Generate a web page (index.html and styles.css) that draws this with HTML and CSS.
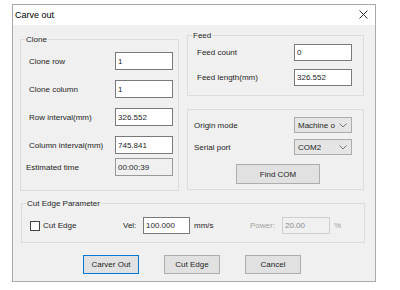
FILE: index.html
```html
<!DOCTYPE html>
<html lang="en">
<head>
  <meta charset="UTF-8" />
  <title>Carve out</title>
  <link rel="stylesheet" href="styles.css">
</head>
<body>
  <div class="window">
    <div class="titlebar">
      <span class="title">Carve out</span>
      <svg class="close" width="9" height="9" viewBox="0 0 9 9">
        <path d="M0.5 0.5 L8.5 8.5 M8.5 0.5 L0.5 8.5" stroke="#333" stroke-width="1" fill="none" />
      </svg>
    </div>
    <div class="content">
      <div class="top">
        <fieldset class="group clone">
          <legend>Clone</legend>
          <div class="rows">
            <div class="row"><label>Clone row</label><input class="edit" value="1"></div>
            <div class="row"><label>Clone column</label><input class="edit" value="1"></div>
            <div class="row"><label>Row interval(mm)</label><input class="edit" value="326.552"></div>
            <div class="row"><label>Column interval(mm)</label><input class="edit" value="745.841"></div>
            <div class="row est"><label>Estimated time</label><input class="edit readonly" value="00:00:39" readonly></div>
          </div>
        </fieldset>
        <div class="right">
          <fieldset class="group feed">
            <legend>Feed</legend>
            <div class="rows">
              <div class="row"><label>Feed count</label><input class="edit" value="0"></div>
              <div class="row"><label>Feed length(mm)</label><input class="edit" value="326.552"></div>
            </div>
          </fieldset>
          <div class="group origin">
            <div class="row"><label>Origin mode</label>
              <div class="combo"><span>Machine o</span>
                <svg width="8" height="5" viewBox="0 0 8 5"><path d="M0.5 0.5 L4 4 L7.5 0.5" stroke="#777" fill="none" /></svg>
              </div>
            </div>
            <div class="row"><label>Serial port</label>
              <div class="combo"><span>COM2</span>
                <svg width="8" height="5" viewBox="0 0 8 5"><path d="M0.5 0.5 L4 4 L7.5 0.5" stroke="#777" fill="none" /></svg>
              </div>
            </div>
            <button class="btn find">Find COM</button>
          </div>
        </div>
      </div>
      <fieldset class="group cut">
        <legend>Cut Edge Parameter</legend>
        <div class="cutrow">
          <span class="check"><span class="box"></span>Cut Edge</span>
          <span class="vel">Vel:</span>
          <input class="edit speed" value="100.000">
          <span class="unit">mm/s</span>
          <span class="power">Power:</span>
          <input class="edit speed disabled" value="20.00" disabled>
          <span class="pct">%</span>
        </div>
      </fieldset>
      <div class="buttons">
        <button class="btn default">Carver Out</button>
        <button class="btn">Cut Edge</button>
        <button class="btn">Cancel</button>
      </div>
    </div>
  </div>
</body>
</html>
```

FILE: styles.css
```css
* {
  box-sizing: border-box;
  font-family: 'Liberation Sans', Arial, sans-serif;
}
body {
  margin: 0;
  background: #fff;
  color: #1e1e1e;
  font-size: 8px;
}
.window {
  margin: 4px 0 0 12px;
  width: 364px;
  height: 278px;
  border: 1px solid #a9a9a9;
  background: #f0f0f0;
  display: flex;
  flex-direction: column;
}
.titlebar {
  height: 20px;
  background: #fff;
  display: flex;
  align-items: center;
  justify-content: space-between;
  padding: 0 7px 0 2px;
}
.title {
  font-size: 9px;
  color: #000;
}
.close {
  margin-top: -1px;
}
.content {
  flex: 1;
  display: flex;
  flex-direction: column;
}
.top {
  display: flex;
  gap: 8px;
  padding-left: 7px;
}
.group {
  margin: 0;
  padding: 0;
  border: 1px solid #dcdcdc;
  min-width: 0;
}
.group legend {
  padding: 0 1px;
  margin-left: 4px;
  line-height: 11px;
  font-size: 8px;
  color: #1e1e1e;
}
.row {
  display: flex;
  align-items: center;
}
.row label {
  flex: none;
}
.edit {
  width: 58px;
  height: 18px;
  border: 1px solid #7a7a7a;
  background: #fff;
  font-size: 8px;
  color: #1e1e1e;
  padding: 0 0 0 2px;
  margin: 0;
  outline: none;
}
.clone {
  width: 159px;
  margin-top: 9px;
}
.clone .rows {
  display: flex;
  flex-direction: column;
  gap: 10px;
  padding: 7px 0 14px 8px;
}
.clone .row label {
  width: 86px;
}
.clone .est {
  margin-top: -6px;
}
.clone .est label {
  margin-left: -3px;
  width: 89px;
}
.readonly {
  background: #f0f0f0;
  border-color: #999;
}
.right {
  width: 177px;
  display: flex;
  flex-direction: column;
}
.feed {
  margin-top: 5px;
}
.feed .rows {
  display: flex;
  flex-direction: column;
  gap: 8px;
  padding: 3px 0 9px 9px;
}
.feed .row label {
  width: 97px;
}
.feed .edit {
  height: 17px;
}
.origin {
  margin-top: 13px;
  display: flex;
  flex-direction: column;
  padding: 7px 0 5px 6px;
  height: 81px;
}
.origin .row label {
  width: 100px;
}
.origin .row + .row {
  margin-top: 6px;
}
.combo {
  width: 58px;
  height: 16px;
  border: 1px solid #acacac;
  background: #e5e5e5;
  display: flex;
  align-items: center;
  justify-content: space-between;
  padding: 0 4px 0 3px;
}
.btn {
  height: 19px;
  width: 56px;
  border: 1px solid #adadad;
  background: #e1e1e1;
  font-size: 8px;
  color: #1e1e1e;
  padding: 0;
  margin: 0;
}
.find {
  margin: 9px 0 0 42px;
  width: 84px;
  height: 20px;
}
.cut {
  margin: 7px 10px 0 8px;
}
.cutrow {
  display: flex;
  align-items: center;
  padding: 8px 0 8px 8px;
}
.check {
  display: flex;
  align-items: center;
  gap: 3px;
  width: 93px;
}
.box {
  width: 10px;
  height: 10px;
  border: 1px solid #444;
  background: #fff;
}
.vel {
  width: 20px;
}
.speed {
  width: 47px;
  height: 17px;
}
.unit {
  margin-left: 4px;
  width: 56px;
}
.power {
  width: 32px;
  color: #a0a0a0;
}
.disabled {
  width: 48px;
  background: #f0f0f0;
  border-color: #cfcfcf;
  color: #8a8a8a;
}
.pct {
  margin-left: 4px;
  color: #a0a0a0;
}
.buttons {
  display: flex;
  gap: 25px;
  padding-left: 70px;
  margin-top: 12px;
}
.default {
  border-color: #0078d7;
}
```
